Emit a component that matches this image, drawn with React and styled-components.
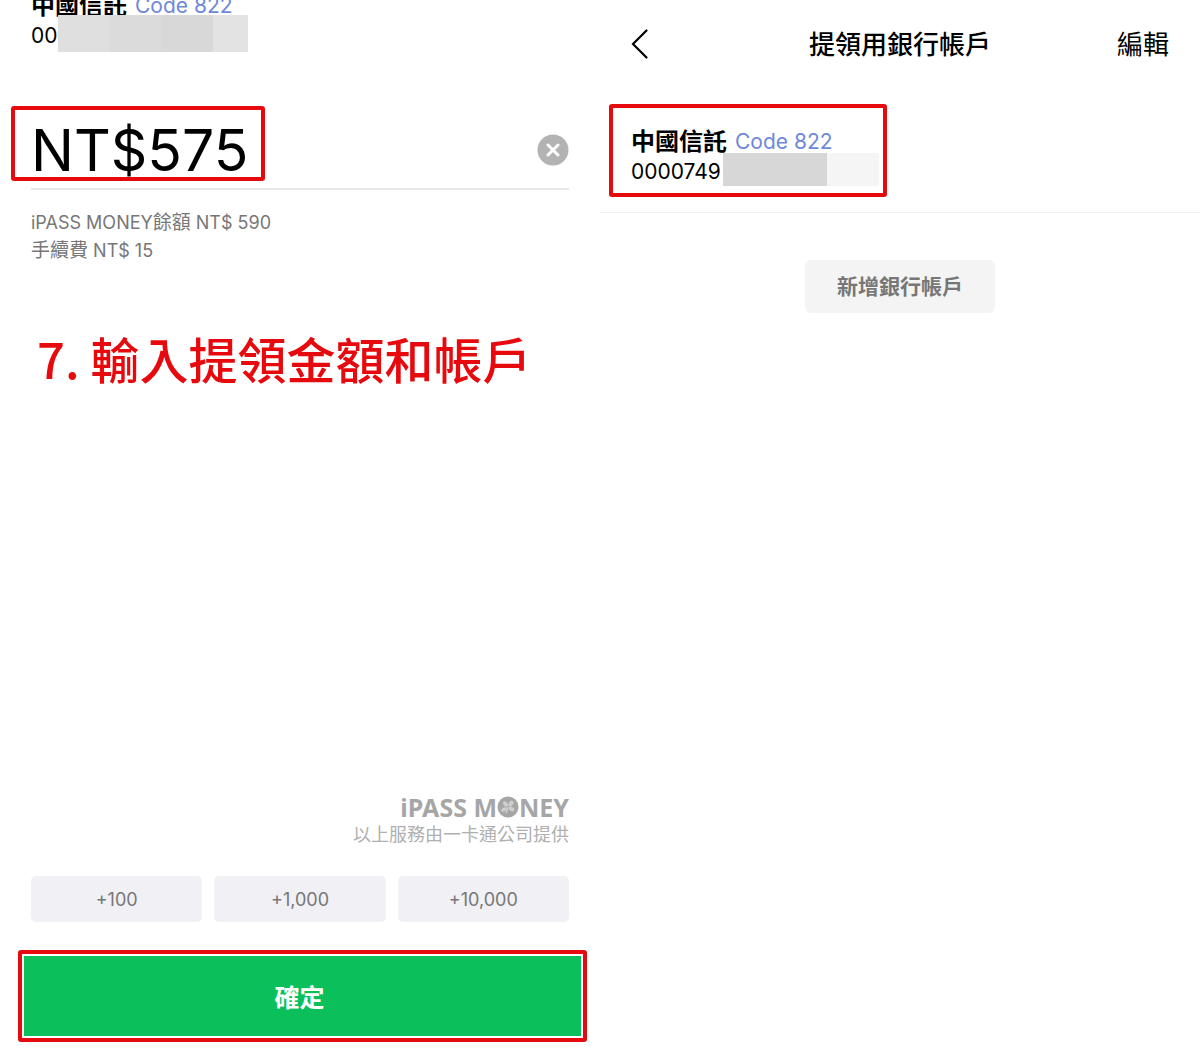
import React, { useState } from "react";
import styled, { createGlobalStyle } from "styled-components";

const GlobalStyle = createGlobalStyle`
  * {
    box-sizing: border-box;
  }
  body {
    margin: 0;
    background: #fff;
    color: #000;
    font-family: Inter, "Noto Sans CJK TC", sans-serif;
  }
  button,
  input {
    font-family: inherit;
  }
  h1,
  h2,
  p {
    margin: 0;
  }
`;

const Page = styled.main`
  display: grid;
  grid-template-columns: 1fr 1fr;
  min-height: 100vh;
  overflow: hidden;
`;

const AmountScreen = styled.form`
  display: flex;
  flex-direction: column;
  padding: 0 31px 8px;
`;

const AccountScreen = styled.section`
  display: flex;
  flex-direction: column;
`;

/* the amount screen is scrolled a little, so its account is cut at the top */
const Scrolled = styled.div`
  margin-top: -10px;
`;

const BankRow = styled.div`
  display: flex;
  align-items: center;
  gap: 8px;
  height: 30px;
  white-space: nowrap;
`;

const BankName = styled.strong`
  padding-bottom: 4px;
  font-size: 24px;
  font-weight: 700;
`;

const BankCode = styled.span`
  font-size: 21px;
  color: #6f88d8;
`;

const NumberRow = styled.div`
  display: flex;
  align-items: center;
  gap: ${(props) => props.$gap};
  height: 30px;
  font-size: 21px;
`;

const Mask = styled.span`
  width: ${(props) => props.$width};
  height: ${(props) => props.$height};
  margin-bottom: 3px;
  background: ${(props) => props.$fill};
`;

const Highlight = styled.div`
  border: 4px solid #e60a0e;
  border-radius: 3px;
  width: ${(props) => props.$width};
  margin: ${(props) => props.$margin};
  padding: ${(props) => props.$padding};
`;

const AmountRow = styled.div`
  display: flex;
  align-items: flex-end;
  justify-content: space-between;
  margin-top: 56px;
  padding-bottom: 7px;
  border-bottom: 2px solid #e6e8ec;
`;

const AmountInput = styled.input`
  display: block;
  width: 100%;
  height: 67px;
  padding: 14px 0 0 16px;
  border: none;
  outline: none;
  background: transparent;
  color: #000;
  font-size: 57px;
`;

const ClearButton = styled.button`
  display: flex;
  margin-bottom: 15px;
  padding: 0;
  border: none;
  background: none;
  cursor: pointer;
`;

const Details = styled.div`
  margin-top: 19px;
  color: #777;
  font-size: 18px;
  line-height: 28px;
`;

const DetailLabel = styled.span`
  font-size: 19px;
`;

const StepTitle = styled.h2`
  margin-top: 63px;
  padding-left: 6px;
  color: #e60a0e;
  font-family: "Noto Sans CJK TC", sans-serif;
  font-size: 49px;
  font-weight: 500;
  line-height: 60px;
  white-space: nowrap;
`;

const Provider = styled.div`
  display: flex;
  flex-direction: column;
  align-items: flex-end;
  margin-top: auto;
  padding-bottom: 27px;
  color: #b0b0b0;
  font-size: 18px;
  line-height: 28px;
`;

const Logo = styled.div`
  display: flex;
  align-items: center;
  color: #a6a6a6;
  font-family: "Noto Sans", sans-serif;
  font-size: 25px;
  font-weight: 700;
  line-height: 28px;
`;

const QuickAmounts = styled.div`
  display: grid;
  grid-template-columns: repeat(3, 1fr);
  gap: 12px;
`;

const QuickButton = styled.button`
  height: 46px;
  border: none;
  border-radius: 5px;
  background: #f0f0f5;
  color: #777;
  font-size: 18px;
  cursor: pointer;
`;

const ConfirmButton = styled.button`
  display: block;
  width: 100%;
  height: 80px;
  padding: 0 6px 0 0;
  border: none;
  background: #0bbf5b;
  color: #fff;
  font-size: 25px;
  font-weight: 700;
  cursor: pointer;
`;

const Header = styled.header`
  display: grid;
  grid-template-columns: 1fr auto 1fr;
  align-items: center;
  height: 88px;
  padding: 0 31px;
`;

const BackButton = styled.button`
  display: flex;
  justify-self: start;
  padding: 0;
  border: none;
  background: none;
  cursor: pointer;
`;

const Title = styled.h1`
  padding-bottom: 4px;
  font-size: 26px;
  font-weight: 500;
`;

const EditButton = styled.button`
  justify-self: end;
  padding: 0 0 4px;
  border: none;
  background: none;
  color: #000;
  font-size: 26px;
  cursor: pointer;
`;

const AccountItem = styled.div`
  padding: 16px 9px 15px;
  border-bottom: 1px solid #f0f0f0;
`;

const AddButton = styled.button`
  align-self: center;
  width: 190px;
  height: 53px;
  margin-top: 47px;
  padding: 0 0 4px;
  border: none;
  border-radius: 6px;
  background: #f4f4f4;
  color: #777;
  font-size: 21px;
  font-weight: 700;
  cursor: pointer;
`;

const Coin = () => (
  <svg width="22" height="22" viewBox="0 0 22 22" aria-hidden="true">
    <circle cx="11" cy="11" r="10.5" fill="#a6a6a6" />
    <g fill="#cfcfcf">
      <ellipse cx="8.5" cy="8" rx="2" ry="3" transform="rotate(-35 8.5 8)" />
      <ellipse cx="14" cy="7.5" rx="2.2" ry="3.2" transform="rotate(30 14 7.5)" />
      <ellipse cx="7" cy="13.5" rx="3.2" ry="1.8" transform="rotate(-30 7 13.5)" />
      <ellipse cx="14.5" cy="13" rx="3" ry="2" transform="rotate(30 14.5 13)" />
    </g>
    <path d="M11 11l-2 6" stroke="#cfcfcf" strokeWidth="1.5" />
  </svg>
);

const Bank = ({ number, gap, children }) => (
  <div>
    <BankRow>
      <BankName>中國信託</BankName>
      <BankCode>Code 822</BankCode>
    </BankRow>
    <NumberRow $gap={gap}>
      {number}
      {children}
    </NumberRow>
  </div>
);

const quickAmounts = [100, 1000, 10000];

const App = () => {
  const [amount, setAmount] = useState("NT$575");

  const addAmount = (value) => {
    const current = Number(amount.replace(/\D/g, ""));
    setAmount(`NT$${current + value}`);
  };

  return (
    <Page>
      <GlobalStyle />
      <AmountScreen onSubmit={(e) => e.preventDefault()}>
        <Scrolled>
          <Bank number="00" gap="0">
            <Mask
              $width="190px"
              $height="37px"
              $fill="linear-gradient(90deg, #dfdfdf 51px, #dbdbdb 51px 103px, #d8d8d8 103px 155px, #e3e3e3 155px)"
            />
          </Bank>
        </Scrolled>

        <AmountRow>
          <Highlight $width="254px" $margin="0 0 0 -20px">
            <AmountInput
              aria-label="提領金額"
              value={amount}
              onChange={(e) => setAmount(e.target.value)}
            />
          </Highlight>
          <ClearButton
            type="button"
            aria-label="清除"
            onClick={() => setAmount("")}
          >
            <svg width="32" height="32" viewBox="0 0 32 32">
              <circle cx="16" cy="16" r="15.5" fill="#b3b3b3" />
              <path
                d="M11 11l10 10M21 11l-10 10"
                stroke="#fff"
                strokeWidth="3"
                strokeLinecap="round"
              />
            </svg>
          </ClearButton>
        </AmountRow>

        <Details>
          <p>
            iPASS MONEY<DetailLabel>餘額</DetailLabel> NT$ 590
          </p>
          <p>
            <DetailLabel>手續費</DetailLabel> NT$ 15
          </p>
        </Details>

        <StepTitle>7. 輸入提領金額和帳戶</StepTitle>

        <Provider>
          <Logo>
            <span>iPASS M</span>
            <Coin />
            <span>NEY</span>
          </Logo>
          <p>以上服務由一卡通公司提供</p>
        </Provider>

        <QuickAmounts>
          {quickAmounts.map((value) => (
            <QuickButton
              key={value}
              type="button"
              onClick={() => addAmount(value)}
            >
              +{value.toLocaleString("en-US")}
            </QuickButton>
          ))}
        </QuickAmounts>

        <Highlight $width="auto" $margin="28px -18px 0 -13px" $padding="2px">
          <ConfirmButton type="submit">確定</ConfirmButton>
        </Highlight>
      </AmountScreen>

      <AccountScreen>
        <Header>
          <BackButton type="button" aria-label="返回">
            <svg width="18" height="32" viewBox="0 0 18 32">
              <path
                d="M15.5 2.5L2 16l13.5 13.5"
                fill="none"
                stroke="#000"
                strokeWidth="2.2"
                strokeLinecap="round"
              />
            </svg>
          </BackButton>
          <Title>提領用銀行帳戶</Title>
          <EditButton type="button">編輯</EditButton>
        </Header>

        <AccountItem>
          <Highlight $width="278px" $margin="0" $padding="18px 4px 7px 18px">
            <Bank number="0000749" gap="2px">
              <Mask
                $width="156px"
                $height="33px"
                $fill="linear-gradient(90deg, #d7d7d7 104px, #f5f5f5 104px)"
              />
            </Bank>
          </Highlight>
        </AccountItem>

        <AddButton type="button">新增銀行帳戶</AddButton>
      </AccountScreen>
    </Page>
  );
};

export default App;
